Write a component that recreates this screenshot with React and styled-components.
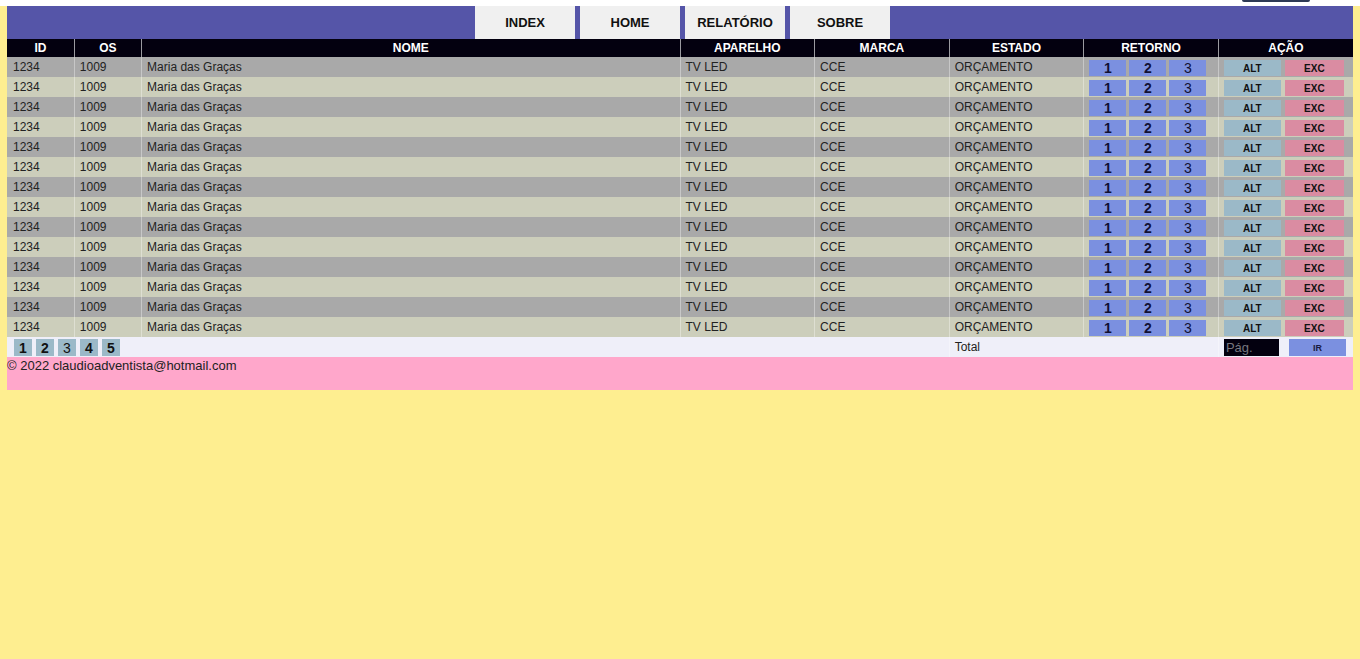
import React from 'react'
import styled, { createGlobalStyle } from 'styled-components'

const GlobalStyle = createGlobalStyle`
  html, body {
    margin: 0;
    padding: 0;
    background: #feee90;
    font-family: "Liberation Sans", Arial, sans-serif;
  }
  * {
    box-sizing: border-box;
  }
`

const rows = Array.from({ length: 14 }, (_, i) => ({
  id: 1234,
  os: 1009,
  nome: 'Maria das Graças',
  aparelho: 'TV LED',
  marca: 'CCE',
  estado: 'ORÇAMENTO',
  key: i,
}))

const columns = [
  { label: 'ID', width: '5%' },
  { label: 'OS', width: '5%' },
  { label: 'NOME', width: '40%' },
  { label: 'APARELHO', width: '10%' },
  { label: 'MARCA', width: '10%' },
  { label: 'ESTADO', width: '10%' },
  { label: 'RETORNO', width: '10%' },
  { label: 'AÇÃO', width: '10%' },
]

const App = () => {
  return (
    <>
      <GlobalStyle />
      <TopStrip>
        <Pill />
      </TopStrip>
      <Wrapper>
        <Nav>
          <NavButton>INDEX</NavButton>
          <NavButton>HOME</NavButton>
          <NavButton>RELATÓRIO</NavButton>
          <NavButton>SOBRE</NavButton>
        </Nav>
        <Table>
          <colgroup>
            {columns.map((c) => (
              <col key={c.label} style={{ width: c.width }} />
            ))}
          </colgroup>
          <thead>
            <tr>
              {columns.map((c) => (
                <Th key={c.label}>{c.label}</Th>
              ))}
            </tr>
          </thead>
          <tbody>
            {rows.map((row, i) => (
              <Row key={row.key} $odd={i % 2 === 0}>
                <Td>{row.id}</Td>
                <Td>{row.os}</Td>
                <Td>{row.nome}</Td>
                <Td>{row.aparelho}</Td>
                <Td>{row.marca}</Td>
                <Td>{row.estado}</Td>
                <Td>
                  <BtnGroup $gap='3px'>
                    <RetBtn>1</RetBtn>
                    <RetBtn>2</RetBtn>
                    <RetBtn $light>3</RetBtn>
                  </BtnGroup>
                </Td>
                <Td>
                  <BtnGroup>
                    <ActBtn $kind='alt'>ALT</ActBtn>
                    <ActBtn $kind='exc'>EXC</ActBtn>
                  </BtnGroup>
                </Td>
              </Row>
            ))}
          </tbody>
          <tfoot>
            <FootRow>
              <Td colSpan={5}>
                <Pages>
                  {[1, 2, 3, 4, 5].map((n) => (
                    <PageBtn key={n} $light={n === 3}>
                      {n}
                    </PageBtn>
                  ))}
                </Pages>
              </Td>
              <Td colSpan={2}>Total</Td>
              <Td>
                <BtnGroup>
                  <PageInput placeholder='Pág.' />
                  <GoBtn>IR</GoBtn>
                </BtnGroup>
              </Td>
            </FootRow>
          </tfoot>
        </Table>
        <Footer>© 2022 claudioadventista@hotmail.com</Footer>
      </Wrapper>
    </>
  )
}

const TopStrip = styled.div`
  height: 6px;
  background: #ffffff;
  display: flex;
  justify-content: flex-end;
  padding-right: 50px;
`

const Pill = styled.div`
  width: 68px;
  height: 2px;
  background: #2e3a55;
  border-radius: 0 0 6px 6px;
`

const Wrapper = styled.div`
  margin: 0 7px;
`

const Nav = styled.nav`
  height: 33px;
  background: #5555a8;
  display: flex;
  justify-content: center;
  gap: 5px;
  padding-left: 5px;
`

const NavButton = styled.a`
  width: 100px;
  height: 33px;
  background: #f0f0f0;
  color: #111;
  font-size: 13px;
  font-weight: bold;
  display: flex;
  align-items: center;
  justify-content: center;
  padding-bottom: 1px;
  cursor: pointer;
`

const Table = styled.table`
  width: 100%;
  border-collapse: collapse;
  table-layout: fixed;
  font-size: 12px;
`

const Th = styled.th`
  height: 18px;
  padding: 0;
  background: #03000f;
  color: #fff;
  font-size: 12px;
  font-weight: bold;
  text-align: center;
  border-left: 1px solid #9a9aa0;
  &:first-child {
    border-left: none;
  }
`

const Row = styled.tr`
  background: ${(p) => (p.$odd ? '#a9a9a9' : '#cccebb')};
`

const FootRow = styled.tr`
  background: #efeff9;
`

const Td = styled.td`
  height: 20px;
  padding: 0 6px 0 5px;
  color: #222;
  font-size: 12px;
  white-space: nowrap;
  vertical-align: middle;
  border-left: 1px solid rgba(255, 255, 255, 0.35);
  &:first-child {
    border-left: none;
    padding-left: 6px;
  }
`

const BtnGroup = styled.div`
  display: flex;
  align-items: center;
  gap: ${(p) => p.$gap || '4px'};
  padding-top: 1px;
`

const RetBtn = styled.span`
  width: 37px;
  height: 16px;
  background: #7b90e0;
  color: #111133;
  font-size: 14px;
  font-weight: ${(p) => (p.$light ? 'normal' : 'bold')};
  display: flex;
  align-items: center;
  justify-content: center;
`

const ActBtn = styled.span`
  width: ${(p) => (p.$kind === 'alt' ? '57px' : '59px')};
  height: 16px;
  background: ${(p) => (p.$kind === 'alt' ? '#9bb9c8' : '#da8ca2')};
  color: #111;
  font-size: 10px;
  font-weight: bold;
  display: flex;
  align-items: center;
  justify-content: center;
  padding-top: 1px;
`

const Pages = styled.div`
  display: flex;
  gap: 4px;
  padding-top: 1px;
  padding-left: 1px;
`

const PageBtn = styled.span`
  width: 18px;
  height: 17px;
  background: #9bb9c8;
  color: #111;
  font-size: 14px;
  font-weight: ${(p) => (p.$light ? 'normal' : 'bold')};
  display: flex;
  align-items: center;
  justify-content: center;
`

const PageInput = styled.input`
  width: 55px;
  height: 17px;
  border: none;
  padding: 0 2px;
  background: #03000f;
  color: #ccc;
  font-family: "Liberation Sans", Arial, sans-serif;
  font-size: 13px;
  &::placeholder {
    color: #77777f;
  }
`

const GoBtn = styled.span`
  width: 57px;
  height: 17px;
  margin-left: 6px;
  background: #7b90e0;
  color: #1a1a40;
  font-size: 9px;
  font-weight: bold;
  display: flex;
  align-items: center;
  justify-content: center;
  padding-top: 1px;
`

const Footer = styled.footer`
  height: 33px;
  background: #ffa7cb;
  color: #222;
  font-size: 13px;
  padding-top: 1px;
`

export default App
